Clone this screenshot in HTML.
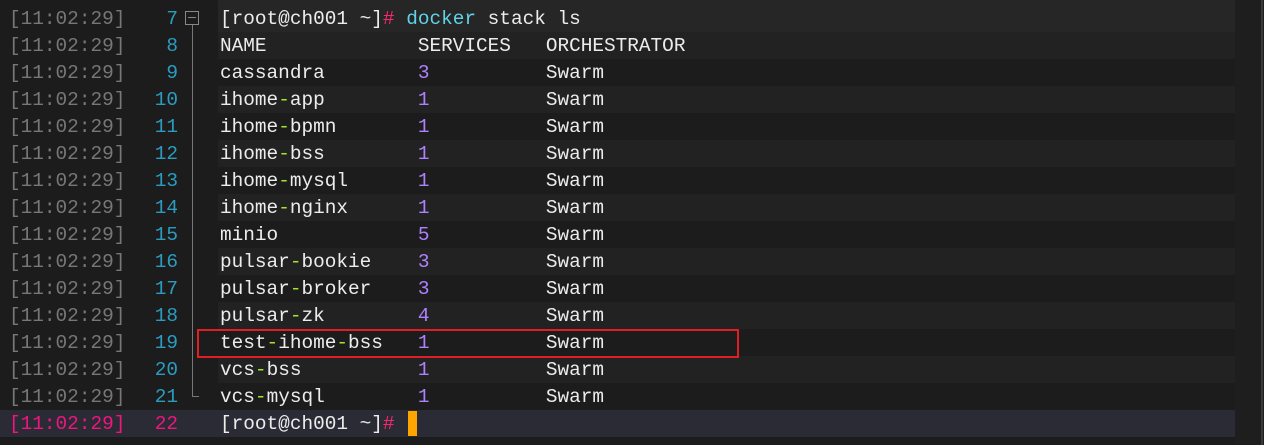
<!DOCTYPE html><html><head><style>
body{margin:0;width:1264px;height:445px;background:#1c1c1c;overflow:hidden;position:relative;font-family:"Liberation Mono",monospace;font-size:19.4px;}
.r{position:absolute;left:0;height:27px;width:1235px;line-height:28px;white-space:pre;}
.b{position:absolute;left:218px;right:0;top:0;bottom:0;background:#222}
.ts{position:absolute;left:9px;color:#777}
.ln{position:absolute;left:130px;width:48px;text-align:right;color:#2b9cc0}
.tx{position:absolute;left:220px;color:#ececec}
.p{color:#f92672}.c{color:#5fd3e8}.g{color:#a6e22e}.n{color:#ae81ff}
</style></head><body>
<div style="position:absolute;left:1235px;top:0;width:29px;height:445px;background:#1e1e1e"></div>
<div style="position:absolute;left:1261px;top:0;width:2px;height:445px;background:#3a3a3a"></div>
<div class="r" style="top:-22px"><div class="b" style="background:#262626"></div></div>
<div class="r" style="top:5px"><div class="b" style="background:#262626"></div><span class="ts">[11:02:29]</span><span class="ln">7</span><span class="tx">[root@ch001 ~]<span class="p">#</span> <span class="c">docker</span> stack ls</span></div>
<div class="r" style="top:32px"><div class="b"></div><span class="ts">[11:02:29]</span><span class="ln">8</span><span class="tx">NAME             SERVICES   ORCHESTRATOR</span></div>
<div class="r" style="top:59px"><span class="ts">[11:02:29]</span><span class="ln">9</span><span class="tx">cassandra        <span class="n">3</span>          Swarm</span></div>
<div class="r" style="top:86px"><div class="b"></div><span class="ts">[11:02:29]</span><span class="ln">10</span><span class="tx">ihome<span class="g">-</span>app        <span class="n">1</span>          Swarm</span></div>
<div class="r" style="top:113px"><span class="ts">[11:02:29]</span><span class="ln">11</span><span class="tx">ihome<span class="g">-</span>bpmn       <span class="n">1</span>          Swarm</span></div>
<div class="r" style="top:140px"><div class="b"></div><span class="ts">[11:02:29]</span><span class="ln">12</span><span class="tx">ihome<span class="g">-</span>bss        <span class="n">1</span>          Swarm</span></div>
<div class="r" style="top:167px"><span class="ts">[11:02:29]</span><span class="ln">13</span><span class="tx">ihome<span class="g">-</span>mysql      <span class="n">1</span>          Swarm</span></div>
<div class="r" style="top:194px"><div class="b"></div><span class="ts">[11:02:29]</span><span class="ln">14</span><span class="tx">ihome<span class="g">-</span>nginx      <span class="n">1</span>          Swarm</span></div>
<div class="r" style="top:221px"><span class="ts">[11:02:29]</span><span class="ln">15</span><span class="tx">minio            <span class="n">5</span>          Swarm</span></div>
<div class="r" style="top:248px"><div class="b"></div><span class="ts">[11:02:29]</span><span class="ln">16</span><span class="tx">pulsar<span class="g">-</span>bookie    <span class="n">3</span>          Swarm</span></div>
<div class="r" style="top:275px"><span class="ts">[11:02:29]</span><span class="ln">17</span><span class="tx">pulsar<span class="g">-</span>broker    <span class="n">3</span>          Swarm</span></div>
<div class="r" style="top:302px"><div class="b"></div><span class="ts">[11:02:29]</span><span class="ln">18</span><span class="tx">pulsar<span class="g">-</span>zk        <span class="n">4</span>          Swarm</span></div>
<div class="r" style="top:329px"><span class="ts">[11:02:29]</span><span class="ln">19</span><span class="tx">test<span class="g">-</span>ihome<span class="g">-</span>bss   <span class="n">1</span>          Swarm</span></div>
<div class="r" style="top:356px"><div class="b"></div><span class="ts">[11:02:29]</span><span class="ln">20</span><span class="tx">vcs<span class="g">-</span>bss          <span class="n">1</span>          Swarm</span></div>
<div class="r" style="top:383px"><span class="ts">[11:02:29]</span><span class="ln">21</span><span class="tx">vcs<span class="g">-</span>mysql        <span class="n">1</span>          Swarm</span></div>
<div class="r" style="top:410px;background:#2b2b35"><span class="ts" style="color:#f0157f">[11:02:29]</span><span class="ln" style="color:#f0157f">22</span><span class="tx">[root@ch001 ~]<span class="p">#</span></span></div>
<div style="position:absolute;left:408px;top:411px;width:9px;height:25px;background:#ffa500"></div>
<div style="position:absolute;left:185px;top:11px;width:12px;height:12px;border:1px solid #888"></div>
<div style="position:absolute;left:188px;top:17px;width:8px;height:1px;background:#888"></div>
<div style="position:absolute;left:192px;top:25px;width:1px;height:372px;background:#777"></div>
<div style="position:absolute;left:192px;top:396px;width:7px;height:1px;background:#777"></div>
<div style="position:absolute;left:197px;top:329px;width:538px;height:25px;border:2px solid #e01e26"></div>
</body></html>
